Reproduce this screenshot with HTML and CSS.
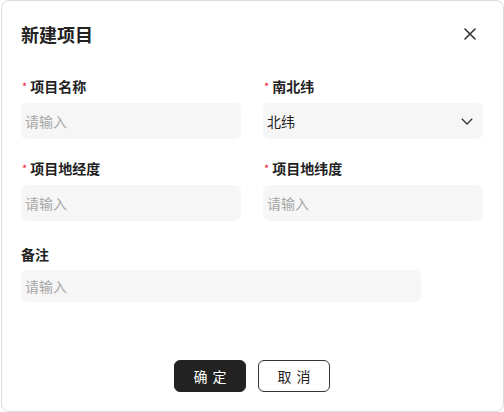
FILE: index.html
```html
<!DOCTYPE html>
<html lang="zh-CN">
<head>
<meta charset="utf-8">
<title>新建项目</title>
<link rel="stylesheet" href="styles.css">
</head>
<body>
<div class="modal">
  <div class="header">
    <h2 class="title">新建项目</h2>
    <button class="close" aria-label="关闭">
      <svg width="12" height="12" viewBox="0 0 12 12"><path d="M1 1L11 11M11 1L1 11" stroke="#333" stroke-width="1.6" fill="none" stroke-linecap="round"/></svg>
    </button>
  </div>
  <div class="form">
    <div class="field">
      <label class="label"><span class="req">*</span>项目名称</label>
      <div class="input placeholder">请输入</div>
    </div>
    <div class="field">
      <label class="label"><span class="req">*</span>南北纬</label>
      <div class="input select"><span>北纬</span>
        <svg width="12" height="7" viewBox="0 0 12 7"><path d="M0.8 0.8L6 6L11.2 0.8" stroke="#333" stroke-width="1.3" fill="none"/></svg>
      </div>
    </div>
    <div class="field">
      <label class="label"><span class="req">*</span>项目地经度</label>
      <div class="input placeholder">请输入</div>
    </div>
    <div class="field">
      <label class="label"><span class="req">*</span>项目地纬度</label>
      <div class="input placeholder">请输入</div>
    </div>
    <div class="field remark">
      <label class="label">备注</label>
      <div class="input placeholder short">请输入</div>
    </div>
  </div>
  <div class="footer">
    <button class="btn primary">确定</button>
    <button class="btn">取消</button>
  </div>
</div>
</body>
</html>
```
FILE: styles.css
```css
html, body {
  margin: 0;
  padding: 0;
  background: #fff;
}
body {
  font-family: "Noto Sans CJK SC", "Noto Sans", sans-serif;
  color: #222;
}
.modal {
  box-sizing: border-box;
  width: 503px;
  height: 412px;
  margin-left: 1px;
  border: 1px solid #dcdcdc;
  border-radius: 8px;
  padding: 21px 20px 19px 19px;
  display: flex;
  flex-direction: column;
  background: #fff;
}
.header {
  display: flex;
  justify-content: space-between;
  align-items: center;
  height: 24px;
}
.title {
  margin: 0;
  font-size: 18px;
  font-weight: 700;
  line-height: 24px;
  color: #222;
}
.close {
  border: 0;
  background: none;
  padding: 0;
  width: 12px;
  height: 12px;
  margin-right: 7px;
  margin-top: 0;
  display: flex;
}
.form {
  margin-top: 30px;
  display: grid;
  grid-template-columns: 220px 220px;
  column-gap: 22px;
  row-gap: 19px;
}
.field {
  display: flex;
  flex-direction: column;
}
.label {
  font-size: 14px;
  font-weight: 700;
  line-height: 20px;
  height: 20px;
  margin-bottom: 7px;
  display: flex;
  align-items: center;
  color: #222;
}
.req {
  color: #f5222d;
  font-size: 11px;
  font-weight: 400;
  margin: 0 3px 0 1px;
}
.input {
  box-sizing: border-box;
  height: 36px;
  border-radius: 6px;
  background: #f6f6f6;
  padding: 0 10px 0 4px;
  font-size: 14px;
  display: flex;
  align-items: center;
  color: #222;
}
.placeholder {
  color: #a6a6a6;
}
.select {
  justify-content: space-between;
}
.remark {
  grid-column: 1 / 3;
  margin-top: 4px;
}
.remark .label {
  margin-bottom: 6px;
}
.short {
  width: 400px;
  height: 32px;
}
.footer {
  margin-top: auto;
  display: flex;
  justify-content: center;
  gap: 12px;
}
.btn {
  box-sizing: border-box;
  width: 72px;
  height: 32px;
  border-radius: 6px;
  border: 1px solid #333;
  background: #fff;
  color: #222;
  font-family: "Noto Sans CJK SC", sans-serif;
  font-size: 14px;
  letter-spacing: 5px;
  text-indent: 5px;
  padding: 0;
}
.btn.primary {
  background: #222;
  border-color: #222;
  color: #fff;
}
```
